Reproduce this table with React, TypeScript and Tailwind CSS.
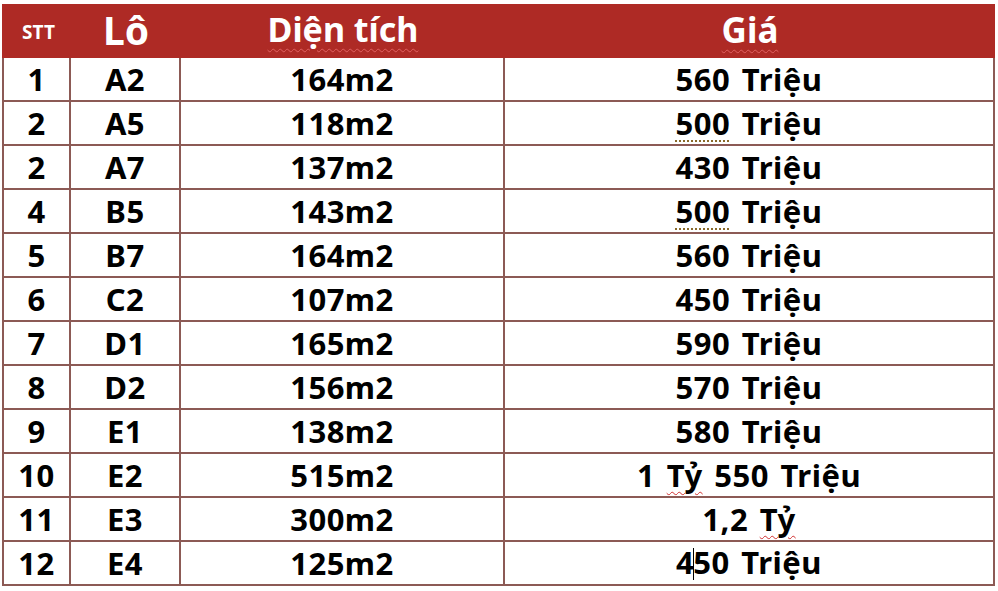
import React from "react";

const dotted = "underline decoration-dotted decoration-[#8a6a2a] decoration-2 underline-offset-[6px]";
const wavy = "underline decoration-wavy decoration-[#d03030] decoration-1 underline-offset-[4px]";

const rows: [string, string, string, React.ReactNode][] = [
  ["1", "A2", "164m2", "560 Triệu"],
  ["2", "A5", "118m2", <><span className={dotted}>500</span> Triệu</>],
  ["2", "A7", "137m2", "430 Triệu"],
  ["4", "B5", "143m2", <><span className={dotted}>500</span> Triệu</>],
  ["5", "B7", "164m2", "560 Triệu"],
  ["6", "C2", "107m2", "450 Triệu"],
  ["7", "D1", "165m2", "590 Triệu"],
  ["8", "D2", "156m2", "570 Triệu"],
  ["9", "E1", "138m2", "580 Triệu"],
  ["10", "E2", "515m2", <>1 <span className={wavy}>Tỷ</span> 550 Triệu</>],
  ["11", "E3", "300m2", <>1,2 <span className={wavy}>Tỷ</span></>],
  ["12", "E4", "125m2", <>4<span className="inline-block w-px h-[32px] bg-black align-[-6px] -mx-px"></span>50 Triệu</>],
];

const font = { fontFamily: '"Noto Sans", "Open Sans", sans-serif' };

export default function App() {
  return (
    <div className="w-[998px] h-[591px] bg-white pt-[4px] pl-[2px]" style={font}>
      <div className="w-[993px]">
        <div className="flex h-[54px] bg-[#ae2a25] text-white font-bold items-center">
          <div className="w-[69px] text-center text-[19px] pl-[4px] pt-[2px]">STT</div>
          <div className="w-[110px] text-center text-[39px] leading-none pb-[4px]">Lô</div>
          <div className="w-[324px] text-center text-[34px] leading-none pb-[4px]">
            <span className="underline decoration-wavy decoration-[#e06060] decoration-1 underline-offset-[6px]">Diện tích</span>
          </div>
          <div className="flex-1 text-center text-[35px] leading-none pb-[4px]">
            <span className="underline decoration-wavy decoration-[#e06060] decoration-1 underline-offset-[6px]">Giá</span>
          </div>
        </div>
        {rows.map((r, i) => (
          <div key={i} className="flex h-[44px] border-b-2 border-x-2 border-[#8c5a55] text-black font-bold text-[31px] leading-none tracking-[0.5px]">
            <div className="w-[67px] border-r-2 border-[#8c5a55] flex items-center justify-center"><span>{r[0]}</span></div>
            <div className="w-[110px] border-r-2 border-[#8c5a55] flex items-center justify-center"><span>{r[1]}</span></div>
            <div className="w-[324px] border-r-2 border-[#8c5a55] flex items-center justify-center"><span>{r[2]}</span></div>
            <div className="flex-1 flex items-center justify-center"><span className="[word-spacing:3px]">{r[3]}</span></div>
          </div>
        ))}
      </div>
    </div>
  );
}
